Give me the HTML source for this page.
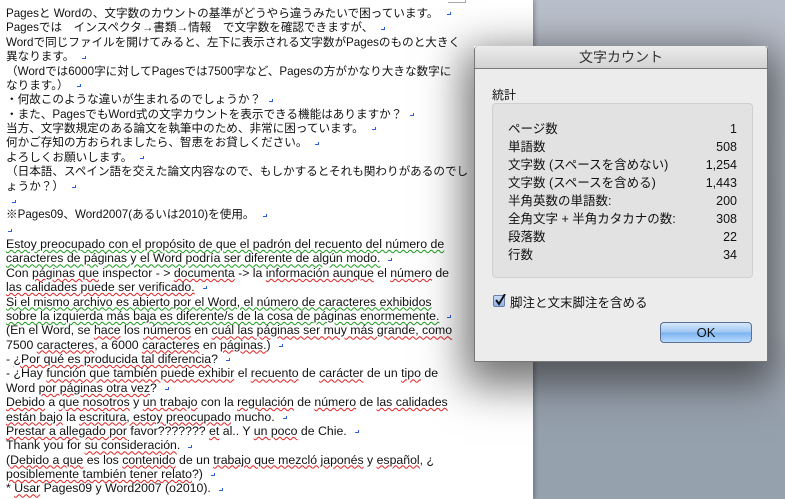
<!DOCTYPE html>
<html><head><meta charset="utf-8">
<style>
*{margin:0;padding:0;box-sizing:border-box}
body{width:785px;height:499px;overflow:hidden;position:relative;background:linear-gradient(#bac0cb 0,#b8bec9 330px,#96a1ae 420px,#96a1ae 499px);font-family:"Liberation Sans","Noto Sans CJK JP",sans-serif}
#page{position:absolute;left:0;top:0;width:533px;height:499px;background:#fff;box-shadow:2px 0 4px rgba(0,0,0,.25)}
#txt{position:absolute;left:6px;top:7px;font-size:12.3px;line-height:14.38px;color:#111;white-space:nowrap}
#txt div{height:14.38px}
#txt .j{font-size:11.6px}
.m{display:inline-block;width:4px;height:3px;border-right:1px solid #2a5fd8;border-bottom:1px solid #2a5fd8;margin-left:8px;vertical-align:middle}
.r{text-decoration:underline wavy #e02020;text-decoration-thickness:1px;text-underline-offset:1px}
.g{text-decoration:underline wavy #1a9a1a;text-decoration-thickness:1px;text-underline-offset:1px}
#shadow{position:absolute;left:474px;top:46px;width:294px;height:316px;box-shadow:0 14px 40px 10px rgba(0,0,0,.55)}
#dlg{position:absolute;left:474px;top:46px;width:294px;height:316px;background:#ececec;border:1px solid #777;border-top:none;border-radius:4px 4px 0 0;overflow:hidden}
#tb{height:23px;background:linear-gradient(#ececec,#d2d2d2);border-bottom:1px solid #7a7a7a;text-align:center;font-size:14px;line-height:23px;color:#333}
.lbl{position:absolute;font-size:12px;color:#111}
#box{position:absolute;left:17px;top:57px;width:261px;height:175px;background:#e2e2e2;border:1px solid #d0d0d0;border-radius:4px}
.row{position:absolute;left:15px;right:15px;font-size:12.5px;height:18px;line-height:18px;color:#111}
.row span{position:absolute;right:0}
#cb{position:absolute;left:18px;top:249px;width:12px;height:12px;border:1px solid #6a7fa8;border-radius:2px;background:linear-gradient(#c8dcf7,#8fb3e8)}
#ok{position:absolute;left:185px;top:276px;width:92px;height:21px;border:1px solid #5a6f94;border-radius:4px;background:linear-gradient(#d7e8fb,#9ec6f3 50%,#7ab2ef 51%,#b8dbff);text-align:center;font-size:13px;line-height:20px;color:#111}
</style></head><body>
<div id="page">
<div style="position:absolute;left:448px;top:0;width:18px;height:3px;border-right:1px solid #aaa;border-bottom:1px solid #aaa"></div>
<div id="txt">
<div class="j">Pagesと Wordの、文字数のカウントの基準がどうやら違うみたいで困っています。<i class="m"></i></div>
<div class="j">Pagesでは　インスペクタ→書類→情報　で文字数を確認できますが、<i class="m"></i></div>
<div class="j">Wordで同じファイルを開けてみると、左下に表示される文字数がPagesのものと大きく</div>
<div class="j">異なります。<i class="m"></i></div>
<div class="j">（Wordでは6000字に対してPagesでは7500字など、Pagesの方がかなり大きな数字に</div>
<div class="j">なります。）<i class="m"></i></div>
<div class="j">・何故このような違いが生まれるのでしょうか？<i class="m"></i></div>
<div class="j">・また、PagesでもWord式の文字カウントを表示できる機能はありますか？<i class="m"></i></div>
<div class="j">当方、文字数規定のある論文を執筆中のため、非常に困っています。<i class="m"></i></div>
<div class="j">何かご存知の方おられましたら、智恵をお貸しください。<i class="m"></i></div>
<div class="j">よろしくお願いします。<i class="m"></i></div>
<div class="j">（日本語、スペイン語を交えた論文内容なので、もしかするとそれも関わりがあるのでし</div>
<div class="j">ょうか？）<i class="m"></i></div>
<div><i class="m" style="margin-left:6px"></i></div>
<div class="j">※Pages09、Word2007(あるいは2010)を使用。<i class="m"></i></div>
<div><i class="m" style="margin-left:2px"></i></div>
<div><span class="g">Estoy preocupado con el propósito de que el padrón del recuento del número de</span></div>
<div><span class="g">caracteres de páginas y el Word podría ser diferente de algún modo.</span><i class="m"></i></div>
<div>Con <span class="r">páginas que</span> inspector - &gt; <span class="r">documenta</span> -&gt; la <span class="r">información aunque</span> el <span class="r">número</span> de</div>
<div><span class="r">las calidades puede ser verificado.</span><i class="m"></i></div>
<div><span class="g">Si el mismo archivo es abierto por el Word, el número de caracteres exhibidos</span></div>
<div><span class="g">sobre la izquierda más baja es diferente/s de la cosa de páginas enormemente.</span><i class="m"></i></div>
<div>(En el Word, se <span class="r">hace</span> los <span class="r">números</span> en <span class="r">cuál las páginas ser muy más grande, como</span></div>
<div>7500 <span class="r">caracteres,</span> a 6000 <span class="r">caracteres</span> en <span class="r">páginas.</span>)<i class="m"></i></div>
<div>- <span class="r">¿Por qué es producida tal diferencia</span>?<i class="m"></i></div>
<div>- ¿Hay <span class="r">función que también puede exhibir</span> el <span class="r">recuento</span> de <span class="r">carácter</span> de un <span class="r">tipo</span> de</div>
<div>Word <span class="r">por páginas otra vez</span>?<i class="m"></i></div>
<div><span class="r">Debido</span> a <span class="r">que nosotros</span> y <span class="r">un trabajo</span> con la <span class="r">regulación</span> de <span class="r">número</span> de <span class="r">las calidades</span></div>
<div><span class="r">están bajo</span> la <span class="r">escritura, estoy preocupado</span> mucho.<i class="m"></i></div>
<div><span class="r">Prestar a allegado por</span> favor??????? <span class="r">et</span> al.. Y <span class="r">un poco</span> de Chie.<i class="m"></i></div>
<div>Thank you for <span class="r">su consideración</span>.<i class="m"></i></div>
<div>(<span class="r">Debido a que</span> es los <span class="r">contenido</span> de un <span class="r">trabajo que mezcló japonés</span> y <span class="r">español,</span> ¿</div>
<div><span class="r">posiblemente también tener relato</span>?)<i class="m"></i></div>
<div>* <span class="r">Usar</span> Pages09 y Word2007 (o2010).<i class="m"></i></div>
</div>
</div>
<div id="shadow"></div>
<div id="dlg">
<div id="tb">文字カウント</div>
<div class="lbl" style="left:17px;top:40px">統計</div>
<div id="box">
<div class="row" style="top:16px">ページ数<span>1</span></div>
<div class="row" style="top:34px">単語数<span>508</span></div>
<div class="row" style="top:52px">文字数 (スペースを含めない)<span>1,254</span></div>
<div class="row" style="top:70px">文字数 (スペースを含める)<span>1,443</span></div>
<div class="row" style="top:88px">半角英数の単語数:<span>200</span></div>
<div class="row" style="top:106px">全角文字 + 半角カタカナの数:<span>308</span></div>
<div class="row" style="top:124px">段落数<span>22</span></div>
<div class="row" style="top:142px">行数<span>34</span></div>
</div>
<div id="cb"><svg width="12" height="12" style="position:absolute;left:0;top:-2px"><path d="M2 6 L5 10 L11 0" stroke="#111" stroke-width="2" fill="none"/></svg></div>
<div class="lbl" style="left:35px;top:246px;font-size:12.5px">脚注と文末脚注を含める</div>
<div id="ok">OK</div>
</div>
</body></html>
